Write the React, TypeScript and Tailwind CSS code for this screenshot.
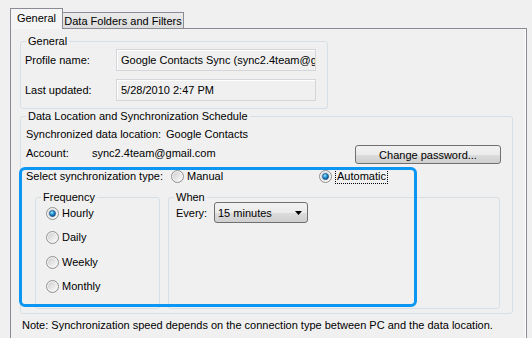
import type { ReactNode } from 'react';

// Win7-style radio bullet, 13px.
function Radio({ checked = false }: { checked?: boolean }) {
  return (
    <svg width="13" height="13" viewBox="0 0 13 13" className="shrink-0">
      <defs>
        <linearGradient id="radio-well" x1="0" y1="0" x2="1" y2="1">
          <stop offset="0" stopColor="#cfcfcf" />
          <stop offset="1" stopColor="#fbfbfb" />
        </linearGradient>
        <radialGradient id="radio-dot" cx="0.4" cy="0.35" r="0.75">
          <stop offset="0" stopColor="#a6e6ff" />
          <stop offset="0.45" stopColor="#1c8fd6" />
          <stop offset="1" stopColor="#0a3466" />
        </radialGradient>
      </defs>
      <circle cx="6.5" cy="6.5" r="6" fill="#f4f4f4" stroke="#8e8f8f" />
      <circle cx="6.5" cy="6.5" r="4.6" fill="url(#radio-well)" />
      {checked && <circle cx="6.5" cy="6.5" r="3.1" fill="url(#radio-dot)" stroke="#1b4a78" strokeWidth="0.6" />}
    </svg>
  );
}

function Group({
  title,
  className = '',
  legendClass = '',
  children,
}: {
  title: string;
  className?: string;
  legendClass?: string;
  children: ReactNode;
}) {
  return (
    <fieldset className={`rounded-[3px] border border-[#d5dfe5] ${className}`}>
      <legend className={`px-[2px] leading-[14px] ${legendClass}`}>{title}</legend>
      {children}
    </fieldset>
  );
}

function ReadOnlyBox({ value }: { value: string }) {
  return (
    <div className="flex h-[22px] w-[200px] items-center overflow-hidden whitespace-nowrap border border-[#d3d7dc] bg-[#f0f0f0] pl-[4px] shadow-[inset_1px_1px_0_#ffffff]">
      {value}
    </div>
  );
}

const FREQUENCIES = [
  { label: 'Hourly', gap: '' },
  { label: 'Daily', gap: 'mt-[6px]' },
  { label: 'Weekly', gap: 'mt-[7px]' },
  { label: 'Monthly', gap: 'mt-[6px]' },
];

export default function App() {
  return (
    <div className="relative h-[338px] w-[532px] overflow-hidden bg-[#f0f0f0] font-['Liberation_Sans',Arial,sans-serif] text-[11px] leading-[16px] text-[#000]">
      {/* Tab strip */}
      <div className="flex h-[28px] items-end pl-[10px]">
        <div className="relative z-10 -mb-px flex h-[21px] w-[53px] items-center justify-center border border-b-0 border-[#898c95] bg-[#f5f5f5] pb-[3px]">
          General
        </div>
        <div className="flex h-[16px] w-[121px] items-center justify-center border border-b-0 border-l-0 border-[#898c95] bg-gradient-to-b from-[#ececec] to-[#dcdcdc]">
          Data Folders and Filters
        </div>
      </div>

      {/* Tab panel */}
      <div className="ml-[10px] h-[320px] w-[517px] border border-[#898c95] bg-[#f0f0f0] pl-[9px] shadow-[inset_-1px_0_0_#ffffff]">
        <Group title="General" className="mt-[5px] w-[308px] pb-[7px] pl-[4px]" legendClass="ml-[1px]">
          <div className="flex flex-col gap-[8px] pt-px">
            <div className="flex items-center">
              <span className="w-[91px]">Profile name:</span>
              <ReadOnlyBox value="Google Contacts Sync (sync2.4team@gmail.com)" />
            </div>
            <div className="flex items-center">
              <span className="w-[91px]">Last updated:</span>
              <ReadOnlyBox value="5/28/2010 2:47 PM" />
            </div>
          </div>
        </Group>

        <Group title="Data Location and Synchronization Schedule" className="w-[493px] pb-[4px] pl-[5px]">
          <div className="flex pt-[3px]">
            <span className="w-[140px]">Synchronized data location:</span>
            <span>Google Contacts</span>
          </div>
          <div className="mt-[3px] flex items-start">
            <span className="w-[66px]">Account:</span>
            <span>sync2.4team@gmail.com</span>
            <button
              type="button"
              className="ml-auto mr-[11px] flex h-[19px] w-[146px] items-center justify-center rounded-[3px] border border-[#707070] bg-[linear-gradient(#f2f2f2_0%,#ebebeb_50%,#dddddd_51%,#cfcfcf_100%)]"
            >
              Change password...
            </button>
          </div>
          <div className="mt-[4px] flex h-[16px] items-center">
            <span className="w-[145px]">Select synchronization type:</span>
            <label className="flex w-[148px] items-center gap-[3px]">
              <Radio />
              <span>Manual</span>
            </label>
            <label className="flex items-center gap-[3px]">
              <Radio checked />
              <span className="border border-dotted border-black px-px leading-[13px]">Automatic</span>
            </label>
          </div>
          <div className="ml-[9px] mt-[6px] flex gap-[8px]">
            <Group title="Frequency" className="w-[125px] pl-[10px]" legendClass="-ml-[5px]">
              <div className="flex h-[104px] flex-col">
                {FREQUENCIES.map((f, i) => (
                  <label key={f.label} className={`flex h-[18px] items-center gap-[3px] ${f.gap}`}>
                    <Radio checked={i === 0} />
                    <span>{f.label}</span>
                  </label>
                ))}
              </div>
            </Group>
            <Group title="When" className="w-[332px] pl-[7px]" legendClass="-ml-[2px]">
              <div className="h-[104px]">
                <div className="-mt-[2px] flex h-[21px] items-center">
                  <span className="w-[38px]">Every:</span>
                  <div className="flex h-[21px] w-[94px] items-center justify-between rounded-[3px] border border-[#707070] bg-[linear-gradient(#f2f2f2_0%,#ebebeb_50%,#dddddd_51%,#cfcfcf_100%)] pl-[3px] pr-[5px]">
                    <span>15 minutes</span>
                    <svg width="7" height="4" viewBox="0 0 7 4">
                      <path d="M0 0h7L3.5 4z" fill="#000" />
                    </svg>
                  </div>
                </div>
              </div>
            </Group>
          </div>
        </Group>

        <p className="ml-[2px] mt-[3px]">
          Note: Synchronization speed depends on the connection type between PC and the data location.
        </p>
      </div>

      {/* Highlight drawn over the sync-type area */}
      <div className="pointer-events-none absolute left-[19px] top-[167px] h-[140px] w-[398px] rounded-[6px] border-[3px] border-[#0a96f2]" />
    </div>
  );
}
